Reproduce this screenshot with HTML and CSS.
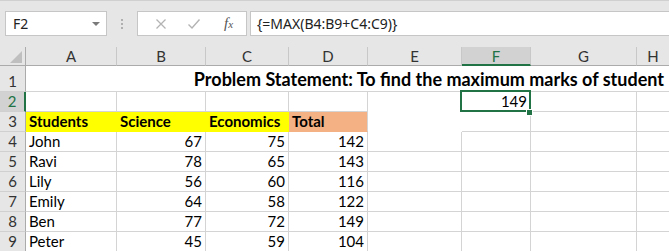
FILE: index.html
```html
<!DOCTYPE html>
<html>
<head>
<meta charset="utf-8">
<link rel="stylesheet" href="styles.css">
</head>
<body>
<div class="app">
  <div class="toolbar">
    <div class="namebox">
      <span class="name">F2</span>
      <span class="caret"></span>
    </div>
    <div class="grip"><span></span><span></span><span></span></div>
    <div class="fxbox">
      <svg class="ico" width="12" height="12" viewBox="0 0 12 12"><path d="M1.5 1.5 L10.5 10.5 M10.5 1.5 L1.5 10.5" stroke="#b3b3b3" stroke-width="1.3" fill="none"/></svg>
      <svg class="ico" width="14" height="12" viewBox="0 0 14 12"><path d="M1.5 6.5 L5 10 L12.5 1.5" stroke="#b3b3b3" stroke-width="1.4" fill="none"/></svg>
      <span class="fx"><i>f</i><span class="fxx">x</span></span>
    </div>
    <div class="formula">{=MAX(B4:B9+C4:C9)}</div>
  </div>

  <div class="sheet">
    <div class="ch corner"><span class="tri"></span></div>
    <div class="ch">A</div>
    <div class="ch">B</div>
    <div class="ch">C</div>
    <div class="ch">D</div>
    <div class="ch">E</div>
    <div class="ch active">F</div>
    <div class="ch">G</div>
    <div class="ch">H</div>

    <div class="rh">1</div>
    <div class="c title">Problem Statement: To find the maximum marks of student</div>

    <div class="rh active">2</div>
    <div class="c"></div><div class="c"></div><div class="c"></div><div class="c"></div>
    <div class="c nob"></div>
    <div class="c num sel">149<span class="handle"></span></div>
    <div class="c"></div><div class="c"></div>

    <div class="rh">3</div>
    <div class="c hd yel">Students</div>
    <div class="c hd yel">Science</div>
    <div class="c hd yel">Economics</div>
    <div class="c hd sal">Total</div>
    <div class="c nob nor"></div>
    <div class="c"></div><div class="c"></div><div class="c"></div>

    <div class="rh">4</div>
    <div class="c">John</div><div class="c num">67</div><div class="c num">75</div><div class="c num">142</div>
    <div class="c"></div><div class="c"></div><div class="c"></div><div class="c"></div>

    <div class="rh">5</div>
    <div class="c">Ravi</div><div class="c num">78</div><div class="c num">65</div><div class="c num">143</div>
    <div class="c"></div><div class="c"></div><div class="c"></div><div class="c"></div>

    <div class="rh">6</div>
    <div class="c">Lily</div><div class="c num">56</div><div class="c num">60</div><div class="c num">116</div>
    <div class="c"></div><div class="c"></div><div class="c"></div><div class="c"></div>

    <div class="rh">7</div>
    <div class="c">Emily</div><div class="c num">64</div><div class="c num">58</div><div class="c num">122</div>
    <div class="c"></div><div class="c"></div><div class="c"></div><div class="c"></div>

    <div class="rh">8</div>
    <div class="c">Ben</div><div class="c num">77</div><div class="c num">72</div><div class="c num">149</div>
    <div class="c"></div><div class="c"></div><div class="c"></div><div class="c"></div>

    <div class="rh">9</div>
    <div class="c">Peter</div><div class="c num">45</div><div class="c num">59</div><div class="c num">104</div>
    <div class="c"></div><div class="c"></div><div class="c"></div><div class="c"></div>
  </div>
</div>
</body>
</html>
```

FILE: styles.css
```css
* { box-sizing: border-box; }
html, body { margin: 0; padding: 0; background: #ffffff; overflow: hidden; }
.app { width: 669px; height: 251px; overflow: hidden; font-family: Lato, "Open Sans", sans-serif; }

.toolbar {
  height: 47px;
  background: #e6e6e6;
  border-top: 1px solid #d0d0d0;
  display: flex;
  align-items: flex-start;
  padding: 10px 0 0 5px;
}
.namebox {
  width: 102px; height: 25px;
  background: #fff; border: 1px solid #c6c6c6;
  display: flex; align-items: center; justify-content: space-between;
  padding: 0 6px 0 7px;
  font-family: "Noto Sans", "Open Sans", sans-serif; font-size: 14px; color: #222;
}
.caret { width: 0; height: 0; border-left: 4px solid transparent; border-right: 4px solid transparent; border-top: 4px solid #7a7a7a; }
.grip { width: 30px; height: 25px; display: flex; flex-direction: column; align-items: center; justify-content: center; gap: 2px; }
.grip span { width: 2px; height: 2px; background: #b0b0b0; }
.fxbox {
  width: 110px; height: 25px;
  background: #fff; border: 1px solid #c6c6c6;
  display: flex; align-items: center;
  padding-left: 17px; gap: 20px;
}
.fx { font-family: "Liberation Serif", serif; color: #555; font-size: 15px; margin-left: 3px; }
.fx i { font-style: italic; }
.fxx { font-style: italic; font-size: 11px; }
.formula {
  flex: 1; height: 25px; margin-left: 3px;
  background: #fff; border: 1px solid #c6c6c6; border-right: none;
  padding-left: 6px; display: flex; align-items: center;
  font-family: "Noto Sans", "Open Sans", sans-serif; font-size: 14px; color: #222;
}

.sheet {
  display: grid;
  grid-template-columns: 26px 91px 89px 83px 79px 94px 69px 106px 33px;
  grid-template-rows: 19px 26px repeat(8, 20px);
  font-size: 15px; color: #000;
}
.ch {
  background: #e6e6e6;
  border-right: 1px solid #c8c8c8;
  border-bottom: 1px solid #ababab;
  text-align: center; line-height: 18px; color: #333; font-size: 15px;
}
.ch.active { background: #d2d2d2; color: #217346; border-bottom: 2px solid #217346; }
.corner { position: relative; border-right: 1px solid #ababab; }
.tri { position: absolute; left: 10px; top: 4px; width: 0; height: 0;
  border-left: 12px solid transparent; border-bottom: 12px solid #bfbfbf; }
.rh {
  background: #e6e6e6;
  border-right: 1px solid #ababab;
  border-bottom: 1px solid #d0d0d0;
  text-align: center; color: #333;
  display: flex; align-items: flex-end; justify-content: center; padding-bottom: 1px;
}
.rh.active { background: #d2d2d2; color: #217346; border-right: 2px solid #217346; }
.c {
  border-right: 1px solid #d4d4d4;
  border-bottom: 1px solid #d4d4d4;
  padding: 0 3px;
  display: flex; align-items: flex-end; padding-bottom: 1px;
  white-space: nowrap; overflow: visible;
}
.num { justify-content: flex-end; }
.title {
  grid-column: 2 / -1;
  justify-content: flex-end;
  font-weight: bold; font-size: 18px; padding-right: 6px; border-right: none;
}
.hd { font-weight: bold; }
.yel { background: #ffff00; border-color: #ffff00; }
.sal { background: #f4b183; border-bottom-color: #f4b183; }
.nob { border-bottom-color: transparent; }
.nor { border-right-color: transparent; }
.sel { position: relative; }
.sel::after {
  content: ""; position: absolute; left: -2px; top: -2px; right: -1px; bottom: -1px;
  border: 2px solid #217346; pointer-events: none;
}
.handle {
  position: absolute; left: 64px; top: 17px; width: 7px; height: 7px;
  background: #217346; border: 1px solid #fff; z-index: 2;
}
```
